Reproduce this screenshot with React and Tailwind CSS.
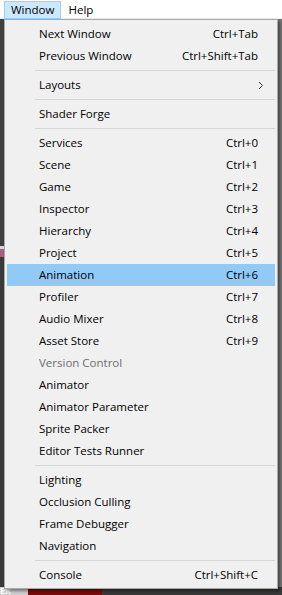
const topItems = [
  { label: "Next Window", keys: "Ctrl+Tab" },
  { label: "Previous Window", keys: "Ctrl+Shift+Tab" },
];

const windowItems = [
  { label: "Services", keys: "Ctrl+0" },
  { label: "Scene", keys: "Ctrl+1" },
  { label: "Game", keys: "Ctrl+2" },
  { label: "Inspector", keys: "Ctrl+3" },
  { label: "Hierarchy", keys: "Ctrl+4" },
  { label: "Project", keys: "Ctrl+5" },
  { label: "Animation", keys: "Ctrl+6", active: true },
  { label: "Profiler", keys: "Ctrl+7" },
  { label: "Audio Mixer", keys: "Ctrl+8" },
  { label: "Asset Store", keys: "Ctrl+9" },
  { label: "Version Control", disabled: true },
  { label: "Animator" },
  { label: "Animator Parameter" },
  { label: "Sprite Packer" },
  { label: "Editor Tests Runner" },
];

const debugItems = [
  { label: "Lighting" },
  { label: "Occlusion Culling" },
  { label: "Frame Debugger" },
  { label: "Navigation" },
];

const MenuItem = ({ label, keys, active, disabled, submenu }) => (
  <div
    className={`flex items-center h-[22px] pl-[32px] pr-[17px] ${
      active ? "bg-[#91c9f7]" : ""
    } ${disabled ? "text-[#6d6d6d]" : "text-black"}`}
  >
    <span className="flex-1 whitespace-nowrap">{label}</span>
    {keys && <span className="whitespace-nowrap">{keys}</span>}
    {submenu && (
      <svg width="6" height="9" viewBox="0 0 6 9" className="-mr-[6px]">
        <path d="M1 1 L4.5 4.5 L1 8" fill="none" stroke="#333" strokeWidth="1" />
      </svg>
    )}
  </div>
);

const Separator = () => (
  <div className="h-[7px] flex items-center pl-[28px]">
    <div className="h-px w-full bg-[#d5d5d5]" />
  </div>
);

export default function App() {
  return (
    <div
      className="relative w-[282px] h-[595px] overflow-hidden bg-[#3e3e3e] text-[11.5px]"
      style={{ fontFamily: '"Open Sans", "Noto Sans", sans-serif' }}
    >
      {/* menu bar */}
      <div className="flex h-[19px] bg-white border-b border-[#f0f0f0]">
        <div className="ml-[4px] mt-px h-[18px] px-[6px] flex items-center bg-[#cce8ff] border border-[#99d1ff]">
          Window
        </div>
        <div className="h-[19px] px-[7px] flex items-center">Help</div>
      </div>

      {/* app background */}
      <div className="flex h-[568px]">
        <div className="w-[4px] flex flex-col">
          <div className="h-[227px] bg-[#404040]" />
          <div className="h-[3px] bg-[#d8d8d8]" />
          <div className="h-[8px] bg-[#a85f80]" />
          <div className="flex-1 bg-[#3a3a3a]" />
        </div>
        <div className="flex-1 bg-[#3c3c3c]" />
        <div className="w-[6px] bg-[#7a7a7a] border-l-2 border-[#5a5a5a]" />
      </div>
      <div className="flex h-[8px] w-full">
        <div className="w-[28px] bg-[#cfcfcf] text-white text-[9px] leading-[8px] font-bold overflow-hidden">ER</div>
        <div className="w-[74px] bg-[#7a0b0b]" />
        <div className="flex-1 bg-[#3a3a3a]" />
      </div>

      {/* dropdown */}
      <div className="absolute left-[4px] top-[19px] w-[274px] bg-[#f0f0f0] border border-[#a9a9a9] px-[2px] pt-[3px] pb-[2px] shadow-[2px_2px_3px_rgba(0,0,0,0.45)]">
        {topItems.map((item) => (
          <MenuItem key={item.label} {...item} />
        ))}
        <Separator />
        <MenuItem label="Layouts" submenu />
        <Separator />
        <MenuItem label="Shader Forge" />
        <Separator />
        {windowItems.map((item) => (
          <MenuItem key={item.label} {...item} />
        ))}
        <Separator />
        {debugItems.map((item) => (
          <MenuItem key={item.label} {...item} />
        ))}
        <Separator />
        <MenuItem label="Console" keys="Ctrl+Shift+C" />
      </div>
    </div>
  );
}
